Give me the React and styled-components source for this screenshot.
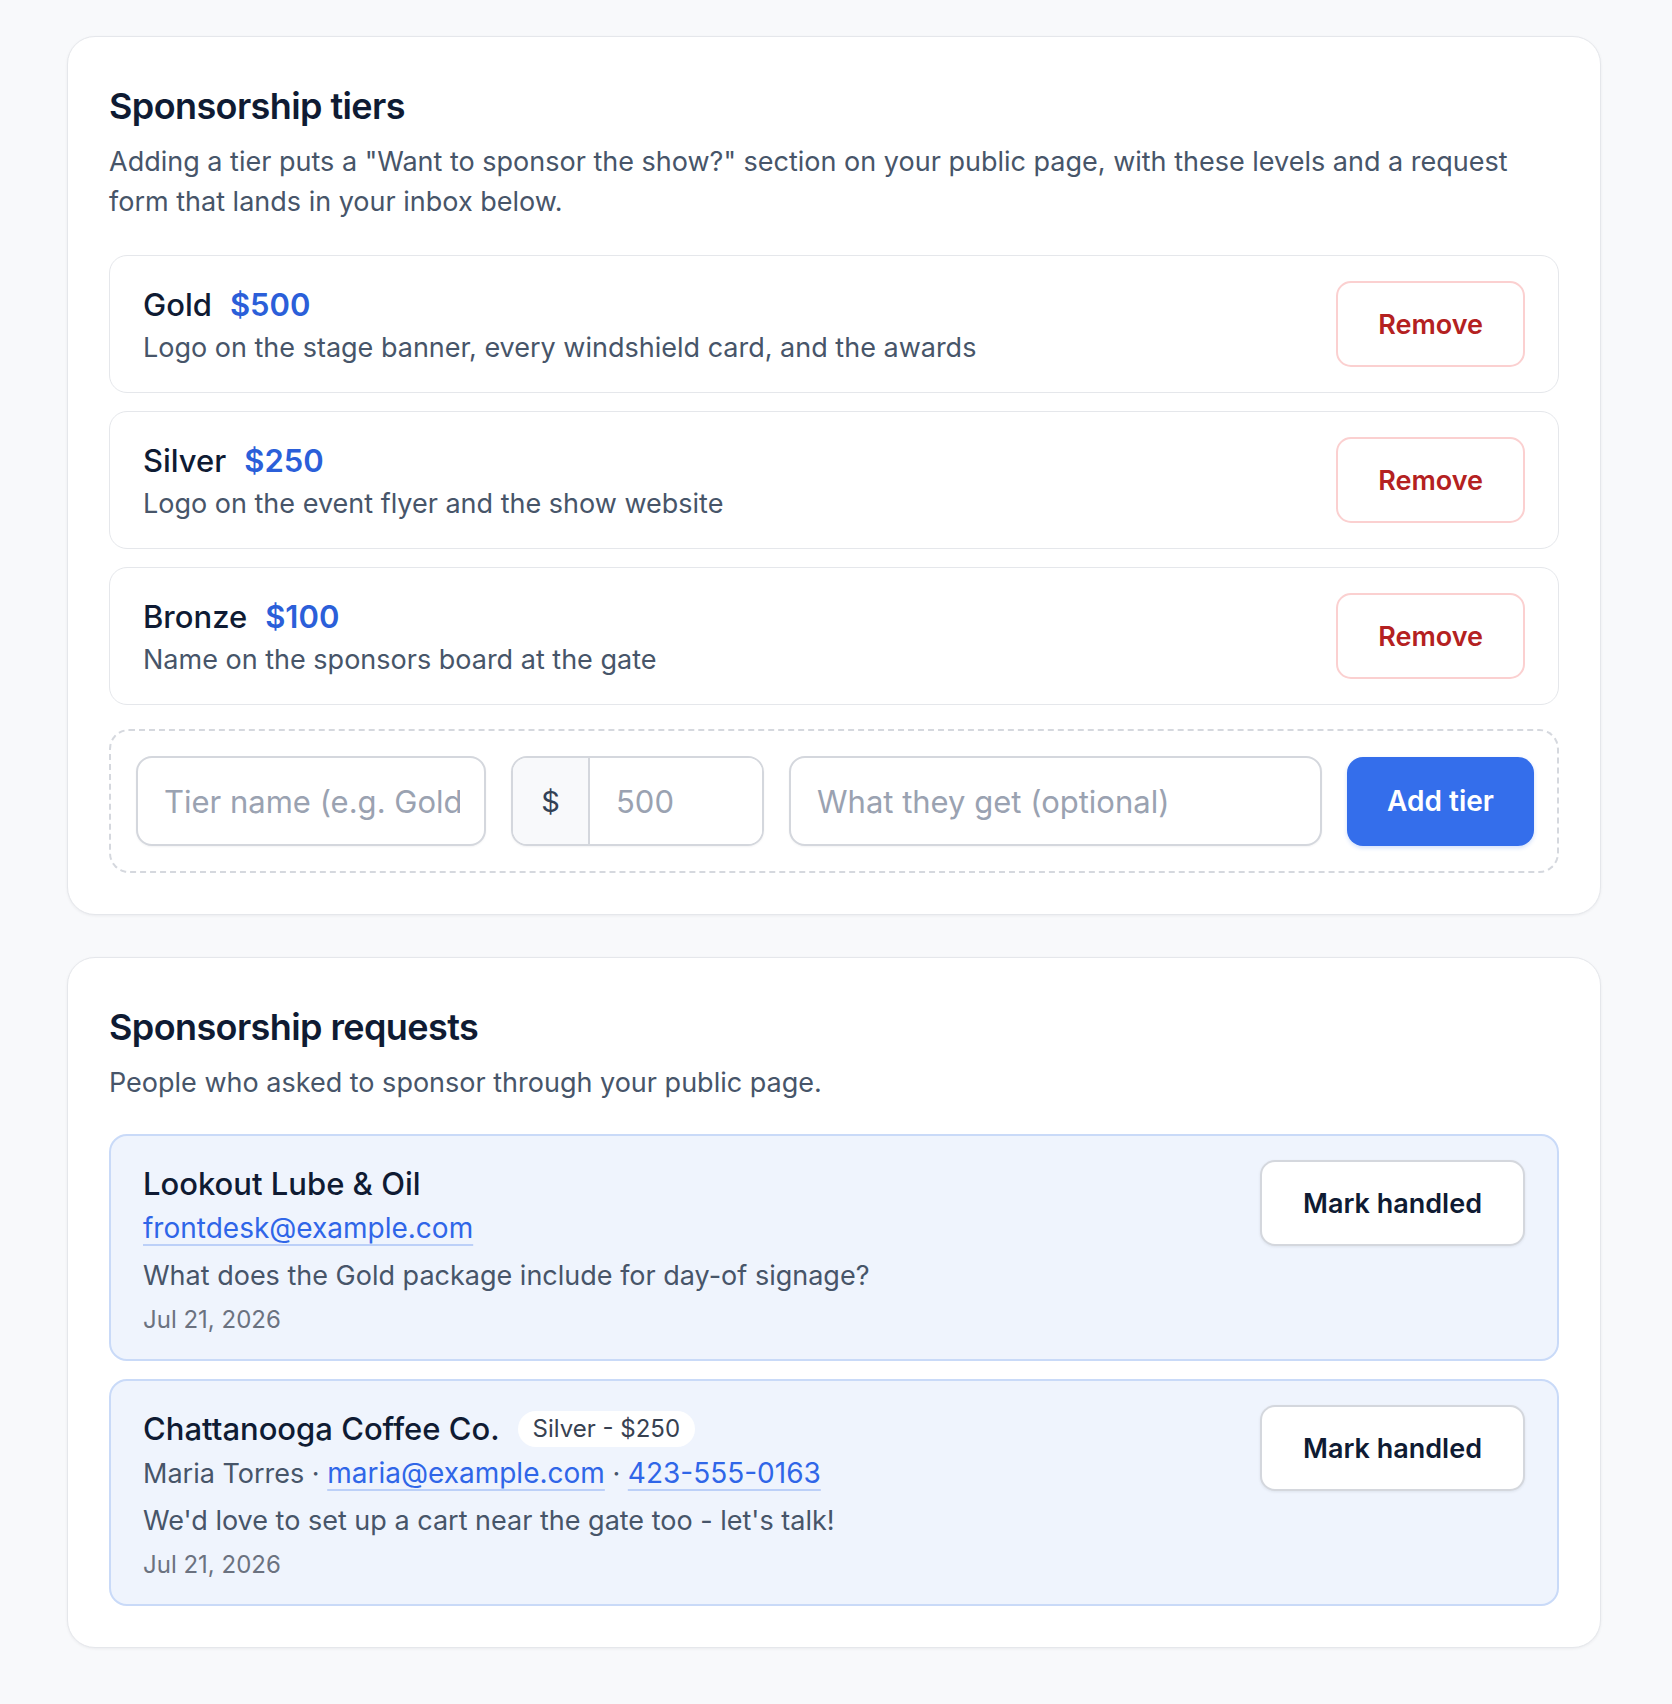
import React from "react";
import styled, { createGlobalStyle } from "styled-components";

const GlobalStyle = createGlobalStyle`
  * { box-sizing: border-box; }
  body {
    margin: 0;
    background: #f8f9fb;
    font-family: Inter, "Noto Sans", "Liberation Sans", sans-serif;
    color: #0f172a;
  }
`;

const Page = styled.div`
  padding: 36px 71px 56px 67px;
  display: flex;
  flex-direction: column;
  gap: 42px;
`;

const Card = styled.section`
  background: #ffffff;
  border: 1px solid #e5e7eb;
  border-radius: 28px;
  padding: 47px 41px 41px;
  box-shadow: 0 1px 3px rgba(15, 23, 42, 0.06);
`;

const Title = styled.h2`
  margin: 0;
  font-size: 36px;
  line-height: 44px;
  font-weight: 600;
  letter-spacing: -0.6px;
  color: #0f1b33;
`;

const Lead = styled.p`
  margin: 14px 0 0;
  font-size: 27px;
  line-height: 40px;
  color: #475569;
`;

const List = styled.div`
  margin-top: ${(p) => p.$top || "33px"};
  display: flex;
  flex-direction: column;
  gap: 18px;
`;

const TierRow = styled.div`
  display: flex;
  align-items: center;
  justify-content: space-between;
  border: 1px solid #e5e7eb;
  border-radius: 18px;
  padding: 24px 33px;
  min-height: 137px;
`;

const TierInfo = styled.div`
  display: flex;
  flex-direction: column;
  gap: 3px;
  padding-top: 5px;
`;

const TierHead = styled.div`
  display: flex;
  align-items: baseline;
  gap: 18px;
  font-size: 31px;
  line-height: 40px;
  font-weight: 500;
  color: #0f1b33;
`;

const Price = styled.span`
  color: #2b5fd9;
  font-weight: 600;
`;

const TierText = styled.div`
  font-size: 27px;
  line-height: 40px;
  color: #475569;
`;

const OutlineButton = styled.button`
  font-family: inherit;
  height: 86px;
  padding: 0 ${(p) => (p.$danger ? "40px" : "41px")};
  border-radius: 15px;
  background: #ffffff;
  border: 2px solid ${(p) => (p.$danger ? "#fbd0d0" : "#d4d7dd")};
  color: ${(p) => (p.$danger ? "#b42121" : "#0f1b33")};
  font-size: 27px;
  font-weight: 600;
  box-shadow: ${(p) => (p.$danger ? "none" : "0 1px 3px rgba(15, 23, 42, 0.08)")};
  cursor: pointer;
  flex-shrink: 0;
`;

const AddForm = styled.div`
  margin-top: 24px;
  border: 2px dashed #d5d8de;
  border-radius: 20px;
  padding: 25px 23px 25px 25px;
  display: flex;
  align-items: center;
  gap: 25px;
`;

const Field = styled.input`
  font-family: inherit;
  height: 90px;
  width: ${(p) => p.$width || "auto"};
  flex: ${(p) => (p.$grow ? "1" : "none")};
  min-width: 0;
  border: 2px solid #d4d7dd;
  border-radius: 16px;
  padding: 0 24px 0 26px;
  font-size: 31px;
  color: #0f172a;
  background: #ffffff;
  box-shadow: 0 1px 2px rgba(15, 23, 42, 0.05);
  outline: none;
  &::placeholder { color: #9aa2b1; }
`;

const MoneyField = styled.div`
  display: flex;
  width: 253px;
  height: 90px;
  border: 2px solid #d4d7dd;
  border-radius: 16px;
  overflow: hidden;
  box-shadow: 0 1px 2px rgba(15, 23, 42, 0.05);
`;

const Prefix = styled.span`
  width: 77px;
  display: flex;
  align-items: center;
  justify-content: center;
  background: #f8f9fb;
  border-right: 2px solid #d4d7dd;
  font-size: 29px;
  color: #334155;
`;

const MoneyInput = styled.input`
  font-family: inherit;
  flex: 1;
  min-width: 0;
  border: none;
  padding: 0 26px;
  font-size: 31px;
  outline: none;
  &::placeholder { color: #9aa2b1; }
`;

const PrimaryButton = styled.button`
  font-family: inherit;
  width: 187px;
  height: 89px;
  border: none;
  border-radius: 16px;
  background: #346eeb;
  color: #ffffff;
  font-size: 28px;
  font-weight: 600;
  box-shadow: 0 2px 4px rgba(37, 99, 235, 0.2);
  cursor: pointer;
`;

const RequestCard = styled.div`
  display: flex;
  align-items: flex-start;
  justify-content: space-between;
  background: #eff4fd;
  border: 2px solid #c9daf8;
  border-radius: 18px;
  padding: 24px 32px 22px;
`;

const RequestInfo = styled.div`
  padding-top: 4px;
  display: flex;
  flex-direction: column;
`;

const RequestName = styled.div`
  display: flex;
  align-items: center;
  gap: 18px;
  font-size: 31px;
  line-height: 40px;
  font-weight: 500;
  color: #0f1b33;
`;

const Badge = styled.span`
  display: inline-flex;
  align-items: center;
  height: 36px;
  padding: 0 15px;
  border-radius: 999px;
  background: #ffffff;
  font-size: 24px;
  font-weight: 400;
  color: #374151;
`;

const Contact = styled.div`
  margin-top: 4px;
  font-size: 27px;
  line-height: 40px;
  color: #475569;
`;

const Link = styled.a`
  font-size: 28px;
  color: #2f66e8;
  text-decoration: underline;
  text-decoration-color: #bcd0f8;
  text-decoration-thickness: 2px;
  text-underline-offset: 6px;
`;

const Message = styled.div`
  margin-top: 7px;
  font-size: 27px;
  line-height: 40px;
  color: #475569;
`;

const DateLine = styled.div`
  margin-top: 7px;
  font-size: 24px;
  line-height: 34px;
  color: #6b7280;
`;

const tiers = [
  { name: "Gold", price: "$500", text: "Logo on the stage banner, every windshield card, and the awards" },
  { name: "Silver", price: "$250", text: "Logo on the event flyer and the show website" },
  { name: "Bronze", price: "$100", text: "Name on the sponsors board at the gate" },
];

export default function App() {
  return (
    <>
      <GlobalStyle />
      <Page>
        <Card>
          <Title>Sponsorship tiers</Title>
          <Lead>
            Adding a tier puts a "Want to sponsor the show?" section on your public page, with these
            levels and a request form that lands in your inbox below.
          </Lead>
          <List>
            {tiers.map((t) => (
              <TierRow key={t.name}>
                <TierInfo>
                  <TierHead>
                    <span>{t.name}</span>
                    <Price>{t.price}</Price>
                  </TierHead>
                  <TierText>{t.text}</TierText>
                </TierInfo>
                <OutlineButton $danger>Remove</OutlineButton>
              </TierRow>
            ))}
          </List>
          <AddForm>
            <Field $width="350px" placeholder="Tier name (e.g. Gold)" />
            <MoneyField>
              <Prefix>$</Prefix>
              <MoneyInput placeholder="500" />
            </MoneyField>
            <Field $grow placeholder="What they get (optional)" />
            <PrimaryButton>Add tier</PrimaryButton>
          </AddForm>
        </Card>

        <Card>
          <Title>Sponsorship requests</Title>
          <Lead>People who asked to sponsor through your public page.</Lead>
          <List $top="31px">
            <RequestCard>
              <RequestInfo>
                <RequestName>Lookout Lube &amp; Oil</RequestName>
                <Contact>
                  <Link href="#">frontdesk@example.com</Link>
                </Contact>
                <Message>What does the Gold package include for day-of signage?</Message>
                <DateLine>Jul 21, 2026</DateLine>
              </RequestInfo>
              <OutlineButton>Mark handled</OutlineButton>
            </RequestCard>
            <RequestCard>
              <RequestInfo>
                <RequestName>
                  Chattanooga Coffee Co.
                  <Badge>Silver - $250</Badge>
                </RequestName>
                <Contact>
                  Maria Torres · <Link href="#">maria@example.com</Link> ·{" "}
                  <Link href="#">423-555-0163</Link>
                </Contact>
                <Message>We'd love to set up a cart near the gate too - let's talk!</Message>
                <DateLine>Jul 21, 2026</DateLine>
              </RequestInfo>
              <OutlineButton>Mark handled</OutlineButton>
            </RequestCard>
          </List>
        </Card>
      </Page>
    </>
  );
}
